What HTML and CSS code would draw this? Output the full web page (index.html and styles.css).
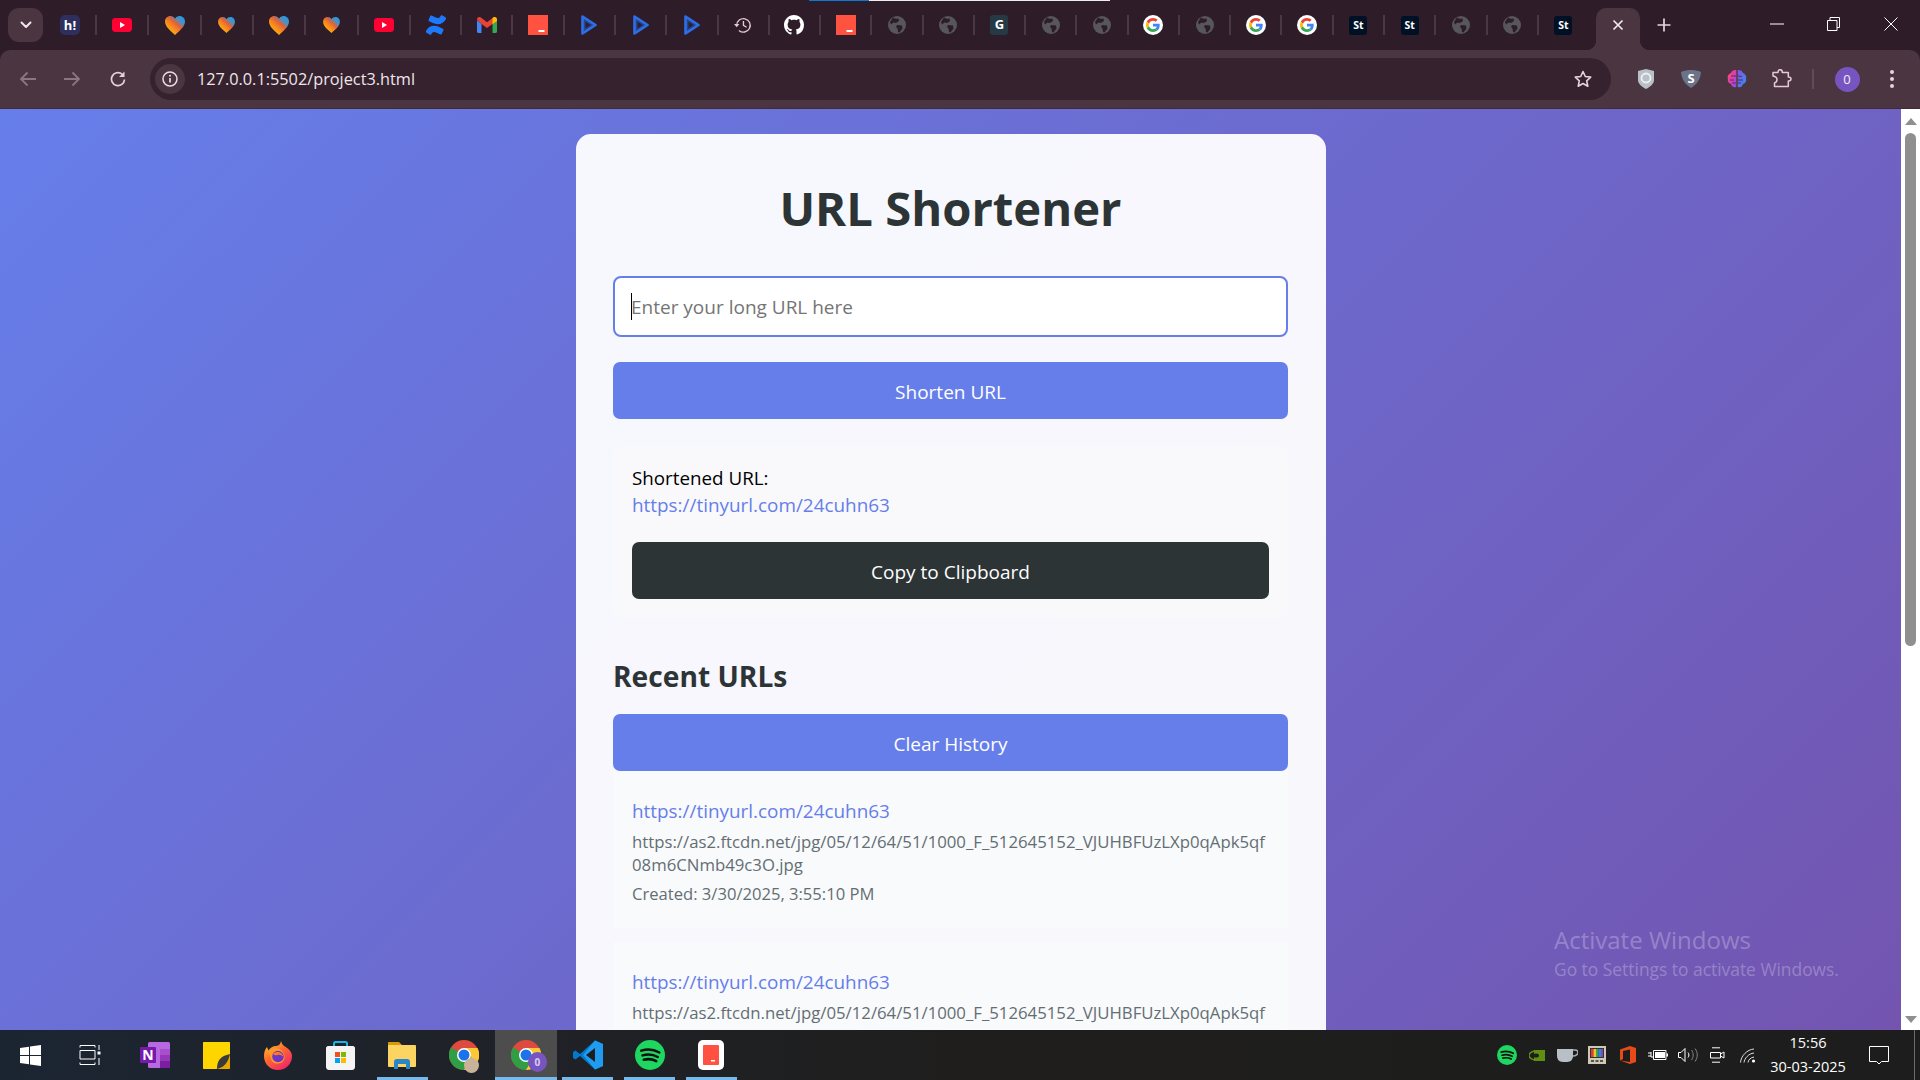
FILE: index.html
```html
<!DOCTYPE html>
<html lang="en">
<head>
<meta charset="utf-8">
<title>URL Shortener</title>
<link rel="stylesheet" href="styles.css">
</head>
<body>
<svg class="defs" aria-hidden="true">
  <defs>
    <linearGradient id="hg" x1=".2" y1=".95" x2=".95" y2=".15"><stop offset="0" stop-color="#ffc20f"/><stop offset=".4" stop-color="#f6821f"/><stop offset=".6" stop-color="#e0603a"/><stop offset=".76" stop-color="#5f8bb0"/><stop offset="1" stop-color="#1f9be8"/></linearGradient>
    <linearGradient id="brl" x1="0" y1="0" x2="1" y2="1"><stop offset="0" stop-color="#ff7a3c"/><stop offset=".35" stop-color="#f13ba0"/><stop offset="1" stop-color="#8a4fe0"/></linearGradient>
    <linearGradient id="brr" x1="0" y1="0" x2="1" y2="1"><stop offset="0" stop-color="#8a4fe0"/><stop offset="1" stop-color="#2f93f5"/></linearGradient>
    <linearGradient id="ff" x1="0" y1="0" x2=".7" y2="1"><stop offset="0" stop-color="#ffd02e"/><stop offset=".5" stop-color="#ff6a2c"/><stop offset="1" stop-color="#f0266a"/></linearGradient>
    <symbol id="yt" viewBox="0 0 20 14"><rect width="20" height="14" rx="3.4" fill="#ff0033"/><path d="M8 4l5 3-5 3z" fill="#fff"/></symbol>
    <symbol id="heart" viewBox="0 0 20 19"><path d="M10 19C6 15 0 11 0 5.500 0 2.300 2.500 0 5.300 0 7.300 0 9 1 10 2.800 11 1 12.700 0 14.700 0 17.500 0 20 2.300 20 5.500 20 11 14 15 10 19z" fill="url(#hg)"/></symbol>
    <symbol id="conf" viewBox="0 0 24 24"><g fill="#1d7afc" stroke="#1d7afc" stroke-width="1.300" stroke-linejoin="round"><path d="M1.300 18.300c-.3.5-.6 1-.9 1.400a.5.5 0 0 0 .2.7l4.400 2.700a.5.5 0 0 0 .7-.2c.2-.4.5-.8.8-1.300 1.700-2.900 3.500-2.500 6.700-1l4.400 2.100a.5.5 0 0 0 .7-.3l2.100-4.700a.5.5 0 0 0-.3-.7c-.9-.4-2.800-1.300-4.400-2.100C10 12.700 4.800 13 1.300 18.300z"/><path d="M22.700 5.700c.3-.5.6-1 .9-1.400a.5.5 0 0 0-.2-.7L19 .9a.5.5 0 0 0-.7.2c-.2.4-.5.8-.8 1.300-1.700 2.900-3.500 2.500-6.700 1L6.400 1.300a.5.5 0 0 0-.7.3L3.600 6.300a.5.5 0 0 0 .3.7c.9.4 2.800 1.300 4.400 2.100 5.700 2.200 10.900 1.900 14.400-3.400z"/></g></symbol>
    <symbol id="gmail" viewBox="0 0 20 16"><path d="M0 3v11.500C0 15.300.7 16 1.500 16H4.500V7z" fill="#4285f4"/><path d="M15.500 7v9h3c.8 0 1.500-.7 1.500-1.500V3z" fill="#34a853"/><path d="M0 2.500C0 .5 2.200-.7 3.800.5L10 5.200 16.200.5C17.800-.7 20 .5 20 2.500L15.500 7 10 11 4.500 7z" fill="#ea4335"/><path d="M16.200.5C17.800-.7 20 .5 20 2.500V4l-4.500 3.300V1z" fill="#fbbc04"/></symbol>
    <symbol id="red" viewBox="0 0 20 20"><rect width="20" height="20" fill="#ff5240"/><rect x="10.500" y="15" width="6" height="2" fill="#fff"/></symbol>
    <symbol id="play" viewBox="0 0 16 20"><path d="M1.500 1.500L14.500 10 1.500 18.500z" fill="#26478e" stroke="#2d6fe8" stroke-width="2.600" stroke-linejoin="round"/><path d="M4.500 6.800L9.800 10 4.500 13.400z" fill="#2e2030"/></symbol>
    <symbol id="hist" viewBox="0 0 20 20"><path d="M3 10.500A7.500 7.500 0 1 1 5.500 16" fill="none" stroke="#e3c8d6" stroke-width="1.500"/><path d="M0 9h6l-3 3.500z" fill="#e3c8d6"/><path d="M10.500 5.500V10.500l3.500 2" fill="none" stroke="#e3c8d6" stroke-width="1.500"/></symbol>
    <symbol id="gh" viewBox="0 0 16 16"><path d="M8 0C3.580 0 0 3.580 0 8c0 3.540 2.290 6.530 5.470 7.590.4.070.55-.17.55-.38 0-.19-.01-.82-.01-1.490-2.010.37-2.530-.49-2.690-.94-.09-.23-.48-.94-.82-1.130-.28-.15-.68-.52-.01-.53.63-.01 1.080.58 1.230.82.72 1.210 1.870.87 2.330.66.07-.52.28-.87.51-1.070-1.780-.2-3.640-.89-3.640-3.950 0-.87.31-1.590.82-2.150-.08-.2-.36-1.020.08-2.120 0 0 .67-.21 2.200.82.64-.18 1.320-.27 2-.27s1.360.09 2 .27c1.530-1.040 2.200-.82 2.200-.82.44 1.100.16 1.920.08 2.120.51.56.82 1.270.82 2.150 0 3.070-1.870 3.750-3.650 3.950.29.25.54.73.54 1.480 0 1.070-.01 1.930-.01 2.200 0 .21.15.46.55.38A8.010 8.010 0 0 0 16 8c0-4.420-3.580-8-8-8z" fill="#fff"/></symbol>
    <symbol id="globe" viewBox="0 0 18 18"><circle cx="9" cy="9" r="9" fill="#56565c"/><path d="M5 1.500C7 3 9 3 10.500 2.500L11 5 8 7 5.500 6.500 3 8.500 2 6zM9 9l5 .5.5 3-3 4-1.500-.5-.5-3.500L8 11z" fill="#2e1c28"/></symbol>
    <symbol id="glogo" viewBox="0 0 48 48"><path fill="#EA4335" d="M24 9.500c3.540 0 6.710 1.220 9.210 3.600l6.850-6.850C35.900 2.380 30.470 0 24 0 14.620 0 6.510 5.380 2.560 13.220l7.980 6.190C12.430 13.720 17.740 9.500 24 9.500z"/><path fill="#4285F4" d="M46.980 24.550c0-1.570-.15-3.090-.38-4.550H24v9.020h12.940c-.58 2.960-2.260 5.480-4.780 7.180l7.730 6c4.510-4.180 7.090-10.360 7.090-17.650z"/><path fill="#FBBC05" d="M10.530 28.590c-.48-1.450-.76-2.990-.76-4.590s.27-3.140.76-4.590l-7.980-6.190C.92 16.460 0 20.120 0 24c0 3.880.92 7.540 2.560 10.780l7.970-6.190z"/><path fill="#34A853" d="M24 48c6.480 0 11.930-2.130 15.890-5.810l-7.730-6c-2.150 1.450-4.920 2.300-8.160 2.300-6.260 0-11.570-4.220-13.470-9.910l-7.980 6.190C6.510 42.620 14.620 48 24 48z"/></symbol>
    <symbol id="spot" viewBox="0 0 24 24"><circle cx="12" cy="12" r="12" fill="#1ed760"/><path d="M5 8.500c5-1.400 10-1 14.500 1.500M6 12.300c4.400-1.200 8.500-.8 12.200 1.300M7 15.800c3.600-.9 7-.6 10 1.100" fill="none" stroke="#111" stroke-width="2" stroke-linecap="round"/></symbol>
    <symbol id="chrome" viewBox="0 0 30 30"><circle cx="15" cy="15" r="15" fill="#dd4a3e"/><path d="M15 15L2 7.500A15 15 0 0 0 15 30L22.500 17z" fill="#2f9e44"/><path d="M15 8h13.500A15 15 0 0 1 15 30l7.500-13z" fill="#fcc934"/><circle cx="15" cy="15" r="7" fill="#fff"/><circle cx="15" cy="15" r="5.500" fill="#1a73e8"/></symbol>
  </defs>
</svg>

<div class="screen">
  <header class="tabstrip">
    <div class="loadbar"><span class="load-blue"></span><span class="load-white"></span></div>
    <button class="tabsearch"><svg width="12" height="8" viewBox="0 0 12 8"><path d="M1.500 1.500L6 6l4.500-4.500" fill="none" stroke="#f0e6ec" stroke-width="2" stroke-linecap="round" stroke-linejoin="round"/></svg></button>
    <div class="tabs">
      <div class="tab"><span class="fav-h">h!</span></div>
      <div class="tab"><svg width="20" height="14"><use href="#yt"/></svg></div>
      <div class="tab"><svg width="20" height="19"><use href="#heart"/></svg></div>
      <div class="tab"><svg width="17" height="16"><use href="#heart"/></svg></div>
      <div class="tab"><svg width="20" height="19"><use href="#heart"/></svg></div>
      <div class="tab"><svg width="17" height="16"><use href="#heart"/></svg></div>
      <div class="tab"><svg width="20" height="14"><use href="#yt"/></svg></div>
      <div class="tab"><svg width="20" height="20"><use href="#conf"/></svg></div>
      <div class="tab"><svg width="20" height="16"><use href="#gmail"/></svg></div>
      <div class="tab"><svg width="20" height="20"><use href="#red"/></svg></div>
      <div class="tab"><svg width="16" height="20"><use href="#play"/></svg></div>
      <div class="tab"><svg width="16" height="20"><use href="#play"/></svg></div>
      <div class="tab"><svg width="16" height="20"><use href="#play"/></svg></div>
      <div class="tab"><svg width="18" height="18"><use href="#hist"/></svg></div>
      <div class="tab"><svg width="20" height="20"><use href="#gh"/></svg></div>
      <div class="tab"><svg width="20" height="20"><use href="#red"/></svg></div>
      <div class="tab"><svg width="18" height="18"><use href="#globe"/></svg></div>
      <div class="tab"><svg width="18" height="18"><use href="#globe"/></svg></div>
      <div class="tab"><span class="fav-g">G</span></div>
      <div class="tab"><svg width="18" height="18"><use href="#globe"/></svg></div>
      <div class="tab"><svg width="18" height="18"><use href="#globe"/></svg></div>
      <div class="tab"><span class="fav-google"><svg width="14" height="14"><use href="#glogo"/></svg></span></div>
      <div class="tab"><svg width="18" height="18"><use href="#globe"/></svg></div>
      <div class="tab"><span class="fav-google"><svg width="14" height="14"><use href="#glogo"/></svg></span></div>
      <div class="tab"><span class="fav-google"><svg width="14" height="14"><use href="#glogo"/></svg></span></div>
      <div class="tab"><span class="fav-st">St</span></div>
      <div class="tab"><span class="fav-st">St</span></div>
      <div class="tab"><svg width="18" height="18"><use href="#globe"/></svg></div>
      <div class="tab"><svg width="18" height="18"><use href="#globe"/></svg></div>
      <div class="tab"><span class="fav-st">St</span></div>
    </div>
    <div class="tab-active"><svg width="12" height="12" viewBox="0 0 12 12"><path d="M1.500 1.500l9 9m0-9l-9 9" stroke="#f3e8ee" stroke-width="1.700"/></svg></div>
    <button class="newtab"><svg width="14" height="14" viewBox="0 0 14 14"><path d="M7 .5v13M.5 7h13" stroke="#e9d5e0" stroke-width="1.700"/></svg></button>
    <div class="winctl">
      <span class="winbtn"><svg width="14" height="2" viewBox="0 0 14 2"><path d="M0 1h14" stroke="#fff"/></svg></span>
      <span class="winbtn"><svg width="13" height="14" viewBox="0 0 13 14"><path d="M.5 3.500h9.500v10H.5z M3 3.500V.5h9.500v10H10" fill="none" stroke="#fff"/></svg></span>
      <span class="winbtn winbtn-close"><svg width="14" height="14" viewBox="0 0 14 14"><path d="M.5.500l13 13m0-13l-13 13" stroke="#fff"/></svg></span>
    </div>
  </header>

  <nav class="toolbar">
    <span class="navbtn"><svg width="18" height="16" viewBox="0 0 18 16"><path d="M17 8H2M8.500 1.500L2 8l6.500 6.500" fill="none" stroke="#8a7581" stroke-width="1.800"/></svg></span>
    <span class="navbtn"><svg width="18" height="16" viewBox="0 0 18 16"><path d="M1 8h15M9.500 1.500L16 8l-6.500 6.500" fill="none" stroke="#8a7581" stroke-width="1.800"/></svg></span>
    <span class="navbtn navbtn-reload"><svg width="16" height="16" viewBox="0 0 16 16"><path d="M14.500 8.500A6.500 6.500 0 1 1 12 3" fill="none" stroke="#e6d3dd" stroke-width="1.700"/><path d="M14.500 .5v5.500H9z" fill="#e6d3dd"/></svg></span>
    <div class="omnibox">
      <span class="site-info"><svg width="16" height="16" viewBox="0 0 16 16"><circle cx="8" cy="8" r="7" fill="none" stroke="#eadde4" stroke-width="1.500"/><path d="M8 7v4.500" stroke="#eadde4" stroke-width="1.700"/><circle cx="8" cy="4.800" r="1" fill="#eadde4"/></svg></span>
      <span class="url">127.0.0.1:5502/project3.html</span>
      <svg class="star" width="18" height="18" viewBox="0 0 18 18"><path d="M9 1.500l2.300 5 5.400.6-4 3.700 1.100 5.400L9 13.500l-4.800 2.700 1.100-5.400-4-3.700 5.400-.6z" fill="none" stroke="#e6d3dd" stroke-width="1.600" stroke-linejoin="round"/></svg>
    </div>
    <span class="ext"><svg width="16" height="20" viewBox="0 0 16 20"><path d="M8 0l8 2v9c0 4-4 7-8 9-4-2-8-5-8-9V2z" fill="#b9c0c8"/><circle cx="8" cy="9" r="4.500" fill="none" stroke="#eef0f2" stroke-width="1.800"/></svg></span>
    <span class="ext"><svg width="20" height="18" viewBox="0 0 20 18"><path d="M10 0c3 0 7 .6 10 2-.5 7-4 12.500-10 16C4 14.500.5 9 0 2c3-1.400 7-2 10-2z" fill="#6b7388"/><text x="10" y="12.500" class="svg-s">S</text></svg></span>
    <span class="ext"><svg width="20" height="20" viewBox="0 0 20 20"><path d="M9.300 1C6.500.5 4.500 2 4 4 1.500 5 0 7.500 1 10c-.8 2.500 1 4.500 3 5 .6 2.500 3 4 5.300 3z" fill="url(#brl)"/><path d="M10.700 1c2.800-.5 4.800 1 5.300 3 2.500 1 4 3.500 3 6 .8 2.500-1 4.500-3 5-.6 2.500-3 4-5.300 3z" fill="url(#brr)"/><path d="M4 7h5M3 11h4M5 14h4M11 7l4 .5M11 11h5M11 14h3" stroke="#3a2c40" stroke-width=".8"/></svg></span>
    <span class="ext"><svg width="20" height="20" viewBox="0 0 20 20"><path d="M1 3.500h5C6 1.500 7 .7 8.200.7S10.300 1.500 10.300 3.500h6V8c1.800 0 2.700.9 2.700 2s-.9 2-2.700 2v5.500H2.500V14C4 13.500 5 12 5 10.500S4 7.500 1 7z" fill="none" stroke="#e6c9d6" stroke-width="1.500" stroke-linejoin="round"/></svg></span>
    <span class="tb-sep"></span>
    <span class="avatar-cell"><span class="avatar">0</span></span>
    <span class="menu-cell"><svg width="4" height="18" viewBox="0 0 4 18"><circle cx="2" cy="2" r="2" fill="#e6d3dd"/><circle cx="2" cy="9" r="2" fill="#e6d3dd"/><circle cx="2" cy="16" r="2" fill="#e6d3dd"/></svg></span>
  </nav>

  <div class="page">
    <main class="viewport">
      <div class="doc">
        <section class="card">
          <h1 class="title">URL Shortener</h1>
          <div class="field">
            <input class="url-input" type="text" placeholder="Enter your long URL here">
            <span class="caret"></span>
          </div>
          <button class="btn btn-primary">Shorten URL</button>
          <div class="result">
            <p class="result-label">Shortened URL:</p>
            <a class="link" href="#">https://tinyurl.com/24cuhn63</a>
            <button class="btn btn-dark">Copy to Clipboard</button>
          </div>
          <h2 class="recent">Recent URLs</h2>
          <button class="btn btn-primary btn-clear">Clear History</button>
          <article class="item">
            <a class="link" href="#">https://tinyurl.com/24cuhn63</a>
            <p class="orig">https://as2.ftcdn.net/jpg/05/12/64/51/1000_F_512645152_VJUHBFUzLXp0qApk5qf<br>08m6CNmb49c3O.jpg</p>
            <p class="created">Created: 3/30/2025, 3:55:10 PM</p>
          </article>
          <article class="item">
            <a class="link" href="#">https://tinyurl.com/24cuhn63</a>
            <p class="orig">https://as2.ftcdn.net/jpg/05/12/64/51/1000_F_512645152_VJUHBFUzLXp0qApk5qf<br>08m6CNmb49c3O.jpg</p>
            <p class="created">Created: 3/30/2025, 3:55:02 PM</p>
          </article>
        </section>
      </div>
      <div class="watermark">
        <p class="wm-1">Activate Windows</p>
        <p class="wm-2">Go to Settings to activate Windows.</p>
      </div>
    </main>
    <aside class="scrollbar">
      <span class="arrow-up"></span>
      <span class="thumb"></span>
      <span class="arrow-down"></span>
    </aside>
  </div>

  <footer class="taskbar">
    <div class="task-left">
      <span class="task"><svg width="21" height="21" viewBox="0 0 21 21"><path d="M0 3l9-1.300V10H0zM10 1.500L21 0v10H10zM0 11h9v8.300L0 18zM10 11h11v10l-11-1.500z" fill="#fff"/></svg></span>
      <span class="task task-view"><svg width="22" height="20" viewBox="0 0 22 20"><path d="M1 .5h15M1 5.500h15V14H1zM1 19.500h15M1 .5v2M16 .5v2M1 17.500v2M16 17.500v2M20 0v5M20 13v7" fill="none" stroke="#fff"/><rect x="18.500" y="6.500" width="3" height="3" fill="#fff"/></svg></span>
      <span class="task"><svg width="30" height="26" viewBox="0 0 30 26"><rect x="8" width="22" height="26" rx="1.500" fill="#b868e0"/><rect x="20" y="7" width="10" height="6" fill="#a850cc"/><rect x="20" y="13" width="10" height="6" fill="#9636b8"/><rect x="20" y="19" width="10" height="7" fill="#7a1fa2"/><rect y="5" width="16" height="16" rx="1" fill="#7719aa"/><text x="8" y="18" class="svg-n">N</text></svg></span>
      <span class="task"><svg width="27" height="27" viewBox="0 0 27 27"><path d="M1 0h25c.6 0 1 .4 1 1v16L17 27H1c-.6 0-1-.4-1-1V1c0-.6.400-1 1-1z" fill="#ffd500"/><path d="M27 12v14c0 .6-.4 1-1 1h-13z" fill="#e8a800"/><path d="M14 27c0-8 3-13 13-15-2 8-5 13-13 15z" fill="#3a3a3a"/></svg></span>
      <span class="task"><svg width="28" height="29" viewBox="0 0 28 29"><path d="M14 29C6 29 0 23 0 15 0 11 1.500 7.500 3 6l1.500 3.500C6 7 8.500 5.500 11 5c3 0 5-.5 6-5 1 3 1.500 4 4 5.500 4 2.500 7 5.500 7 9.500 0 8-6 14-14 14z" fill="url(#ff)"/><path d="M4 10c3-2.500 6-3 9-2.500 4 .5 7 3.500 7.500 7.500.5 4-2 7-6 7.500-4 .5-7-1.500-7.500-5z" fill="#ff9a26"/><circle cx="14" cy="15.500" r="5.800" fill="#6e35c9"/><path d="M9 13c2-2 5-2.500 7-1.500 2 1 3 2.500 3 4-2-1.800-4-2.300-5.500-1.500-1.500.5-3 .3-4.500-1z" fill="#ff7a1f"/></svg></span>
      <span class="task"><svg width="29" height="29" viewBox="0 0 29 29"><path d="M8 6V2.500C8 1.500 8.700 1 9.500 1h10c.8 0 1.500.5 1.500 1.500V6" fill="none" stroke="#19b5e8" stroke-width="2"/><path d="M2 5h25c1 0 2 1 2 2v19c0 1.500-1 3-3 3H3c-2 0-3-1.500-3-3V7c0-1 1-2 2-2z" fill="#f4f4f4"/><rect x="9" y="11" width="5" height="5" fill="#f25022"/><rect x="15" y="11" width="5" height="5" fill="#7fba00"/><rect x="9" y="17" width="5" height="5" fill="#00a4ef"/><rect x="15" y="17" width="5" height="5" fill="#ffb900"/></svg></span>
      <span class="task task-run"><svg width="28" height="28" viewBox="0 0 28 28"><path d="M0 2c0-.6.4-1 1-1h10l3 3v3H0z" fill="#d99a09"/><rect y="4" width="28" height="22" rx="1" fill="#fcd462"/><path d="M6 28v-7c0-2 1-3 3-3h10c2 0 3 1 3 3v7h-4v-5h-8v5z" fill="#2a85c9"/></svg></span>
      <span class="task"><svg width="30" height="30"><use href="#chrome"/></svg><span class="badge-photo"></span></span>
      <span class="task task-active"><svg width="30" height="30"><use href="#chrome"/></svg><span class="badge-o">0</span></span>
      <span class="task task-run"><svg width="30" height="30" viewBox="0 0 30 30"><path d="M22 .5L30 4v22l-8 3.500L7 16l-4.500 3.500L0 18V12l2.500-1.500L7 14z" fill="#007acc"/><path d="M22 .5L30 4v22l-8 3.500L10 15z" fill="#1f9cf0"/><path d="M22 8L13 15l9 7z" fill="#1c1e22"/></svg></span>
      <span class="task task-run"><svg width="30" height="30"><use href="#spot"/></svg></span>
      <span class="task task-run"><svg width="26" height="30" viewBox="0 0 26 30"><rect width="26" height="30" rx="5" fill="#fff"/><rect x="5" y="5" width="16" height="20" rx="1" fill="#ff5240"/><rect x="13" y="20" width="4" height="1.500" fill="#fff"/></svg></span>
    </div>
    <div class="task-right">
      <span class="tray"><svg width="20" height="20"><use href="#spot"/></svg></span>
      <span class="tray"><svg width="16" height="11" viewBox="0 0 16 11"><rect x="5" width="11" height="11" fill="#5f8f12"/><ellipse cx="7" cy="5.500" rx="7" ry="4.500" fill="none" stroke="#5f8f12" stroke-width="1.500"/><ellipse cx="7" cy="5.500" rx="3" ry="2" fill="#1e1e1e"/></svg></span>
      <span class="tray"><svg width="21" height="14" viewBox="0 0 21 14"><path d="M0 1h16v7c0 3-2 6-6 6H6c-4 0-6-3-6-6z" fill="#b9bfc7"/><path d="M16 2h2c2 0 3 1 3 2.500S19 8 16 8" fill="none" stroke="#aaa" stroke-width="1.500"/></svg></span>
      <span class="tray"><svg width="18" height="18" viewBox="0 0 18 18"><rect width="18" height="18" fill="#cfc8b4"/><rect x="2" y="2" width="14" height="10" fill="#333"/><rect x="3" y="3" width="2.500" height="8" fill="#e53935"/><rect x="5.500" y="3" width="2.500" height="8" fill="#fbc02d"/><rect x="8" y="3" width="2.500" height="8" fill="#43a047"/><rect x="10.500" y="3" width="2.500" height="8" fill="#1e88e5"/><rect x="13" y="3" width="2" height="8" fill="#8e44ad"/><rect x="3" y="14" width="3" height="2" fill="#555"/><rect x="7.500" y="14" width="3" height="2" fill="#555"/><rect x="12" y="14" width="3" height="2" fill="#555"/></svg></span>
      <span class="tray"><svg width="16" height="18" viewBox="0 0 16 18"><path d="M0 3.500L10 0l6 2v14l-6 2L0 14.500 10 16V3.500L3 5v8l-3 1.500z" fill="#e64a19"/></svg></span>
      <span class="tray"><svg width="20" height="12" viewBox="0 0 20 12"><path d="M5.500 1.500h12.500v9H5.500z" fill="none" stroke="#fff"/><rect x="7" y="3" width="10" height="6" fill="#fff"/><rect x="18.500" y="4.500" width="1.500" height="3" fill="#fff"/><path d="M0 4h3M0 7h3M3 3v5h2" stroke="#fff" fill="none"/></svg></span>
      <span class="tray"><svg width="20" height="14" viewBox="0 0 20 14"><path d="M.5 4.500h2.500l4-4v13l-4-4H.5z" fill="none" stroke="#fff"/><path d="M10 4.500c1.200 1.500 1.200 3.500 0 5" fill="none" stroke="#fff"/><path d="M13.500 2c2.200 3 2.200 7 0 10M17 .5c3 4 3 9 0 13" fill="none" stroke="#888"/></svg></span>
      <span class="tray"><svg width="15" height="16" viewBox="0 0 15 16"><path d="M2 .8h8M2 15.200h8" stroke="#fff"/><path d="M.5 5.500h10v5.500H.5zM10.500 7l3.500-2v6l-3.500-2z" fill="none" stroke="#fff"/></svg></span>
      <span class="tray"><svg width="16" height="15" viewBox="0 0 16 15"><path d="M.5 14.500C1 8 7 1.500 14 1M4 14.500C4.500 10.500 8.500 5.500 14 5M8 14.500c.2-2.500 2.500-5 6-5.500" fill="none" stroke="#fff" opacity=".85"/><circle cx="13.500" cy="13" r="1.600" fill="#fff"/></svg></span>
      <span class="clock"><span>15:56</span><span>30-03-2025</span></span>
      <span class="notif"><svg width="20" height="19" viewBox="0 0 20 19"><path d="M.5.500h19v15H12.500L10 18l-2.500-2.500H.5z" fill="none" stroke="#fff"/></svg></span>
      <span class="desk-line"></span>
    </div>
  </footer>
</div>
</body>
</html>
```

FILE: styles.css
```css
* { box-sizing: border-box; }
html, body { margin: 0; height: 100%; overflow: hidden; }
body { font-family: "Open Sans", "Noto Sans", sans-serif; background: #2e1c28; }
p, h1, h2 { margin: 0; }
button { font-family: inherit; border: 0; padding: 0; }
.defs { position: absolute; width: 0; height: 0; }
.screen { display: flex; flex-direction: column; width: 1920px; height: 1080px; }

/* tab strip */
.tabstrip { position: relative; display: flex; flex: none; height: 50px; padding-left: 8px; background: #2e1c28; }
.loadbar { position: absolute; top: 0; left: 809px; display: flex; height: 1px; }
.load-blue { width: 60px; background: #0a78d6; }
.load-white { width: 241px; background: #eee; }
.tabsearch { display: flex; align-items: center; justify-content: center; flex: none; width: 35px; height: 34px; margin-top: 8px; border-radius: 11px; background: #4b3541; }
.tabs { display: flex; flex: none; margin-left: .85px; }
.tab { position: relative; display: flex; align-items: center; justify-content: center; flex: none; width: 51.27px; height: 50px; }
.tab:nth-child(-n+7) { width: 52.3px; }
.tab:not(:last-child)::after { content: ""; position: absolute; right: -1px; top: 15px; width: 2px; height: 20px; background: #4b3843; }
.fav-h { display: flex; align-items: center; justify-content: center; width: 20px; height: 20px; border-radius: 5px; background: #2e2f5e; color: #fff; font: 700 13px "Open Sans", sans-serif; }
.fav-g { display: flex; align-items: center; justify-content: center; width: 18px; height: 20px; padding-bottom: 3px; border-radius: 3px; background: #253a45; color: #fff; font: 700 13px "Open Sans", sans-serif; }
.fav-st { display: flex; align-items: center; justify-content: center; width: 18px; height: 19px; border-radius: 3px; background: #001125; color: #fff; font: 700 10.5px "Open Sans", sans-serif; }
.fav-google { display: flex; align-items: center; justify-content: center; width: 20px; height: 20px; border-radius: 50%; background: #fff; }
.tab-active { position: relative; display: flex; align-items: center; justify-content: center; flex: none; width: 44px; height: 42px; margin-top: 8px; margin-left: 7px; padding-bottom: 8px; border-radius: 10px 10px 0 0; background: #4b3541; }
.tab-active::before, .tab-active::after { content: ""; position: absolute; bottom: 0; width: 10px; height: 10px; }
.tab-active::before { left: -10px; background: radial-gradient(circle at 0 0, transparent 10px, #4b3541 10.5px); }
.tab-active::after { right: -10px; background: radial-gradient(circle at 100% 0, transparent 10px, #4b3541 10.5px); }
.newtab { display: flex; align-items: center; justify-content: center; flex: none; width: 36px; height: 34px; margin-top: 8px; margin-left: 6px; background: none; }
.winctl { display: flex; margin-left: auto; }
.winbtn { display: flex; align-items: center; justify-content: center; width: 56px; height: 48px; }
.winbtn-close { width: 59px; }

/* toolbar */
.toolbar { display: flex; align-items: center; flex: none; height: 59px; padding-left: 6px; border-radius: 10px 10px 0 0; background: #4b3541; border-bottom: 1px solid #3f2c38; }
.navbtn { display: flex; align-items: center; justify-content: center; flex: none; width: 44px; height: 42px; }
.navbtn-reload { margin-left: 2px; }
.omnibox { display: flex; align-items: center; flex: none; width: 1461px; height: 42px; margin-left: 10px; padding-left: 5px; border-radius: 21px; background: #35222e; }
.site-info { display: flex; align-items: center; justify-content: center; flex: none; width: 30px; height: 30px; border-radius: 50%; background: #4b3541; }
.url { margin-left: 12px; color: #efe6eb; font: 400 16.3px "Open Sans", sans-serif; }
.star { margin-left: auto; margin-right: 19px; }
.ext { display: flex; align-items: center; justify-content: center; flex: none; width: 45.5px; }
.omnibox + .ext { margin-left: 12px; }
.svg-s { fill: #fff; font: 700 13px "Open Sans", sans-serif; text-anchor: middle; }
.tb-sep { flex: none; width: 2px; height: 20px; margin-left: 7px; background: #614b58; }
.avatar-cell { display: flex; justify-content: center; flex: none; width: 45px; margin-left: 10.5px; }
.avatar { display: flex; align-items: center; justify-content: center; width: 25px; height: 25px; border-radius: 50%; background: #7755c0; color: #f2ecf7; font: 400 13px "Open Sans", sans-serif; }
.menu-cell { display: flex; justify-content: center; flex: none; width: 45px; }

/* page */
.page { display: flex; flex: 1; min-height: 0; }
.viewport { position: relative; flex: 1; overflow: hidden; }
.doc { height: 1590px; padding-top: 25px; background: linear-gradient(135deg, #667eea 0%, #764ba2 100%); }
.card { width: 750px; height: 1500px; margin: 0 auto; padding: 37.5px 37.5px 0; border-radius: 15px; background: rgba(255, 255, 255, .95); }
.title { height: 72px; margin-bottom: 32px; color: #2d3436; font-size: 47.2px; font-weight: 700; line-height: 72px; text-align: center; }
.field { position: relative; margin-bottom: 25px; }
.url-input { display: block; width: 100%; height: 61px; padding: 2px 16px 0; border: 2.5px solid #667eea; border-radius: 8px; outline: 0; background: #fff; color: #2d3436; font: 400 19px "Open Sans", sans-serif; }
.url-input::placeholder { color: #757575; opacity: 1; }
.caret { position: absolute; left: 17.5px; top: 17px; width: 1px; height: 27px; background: #000; }
.btn { display: block; width: 100%; height: 57px; padding-top: 3px; border-radius: 7px; color: #fff; font-size: 19px; line-height: 54px; }
.btn-primary { background: #667eea; }
.btn-dark { margin-top: 23px; background: #2d3436; }
.result { margin-top: 27px; padding: 19px; border-radius: 10px; background: #f9f9fc; }
.result-label { height: 27px; color: #000; font-size: 18.8px; line-height: 26px; }
.link { display: block; height: 27px; color: #667eea; font-size: 18.9px; line-height: 27px; text-decoration: none; }
.recent { height: 40px; margin-top: 38px; color: #2d3436; font-size: 28.2px; font-weight: 700; line-height: 40px; }
.btn-clear { margin-top: 18px; }
.item { height: 157px; margin-bottom: 14px; padding: 27px 19px 0; background: #f9fafc; }
.orig { margin-top: 5px; color: #636e72; font-size: 16.75px; line-height: 23px; white-space: nowrap; }
.created { margin-top: 6px; color: #636e72; font-size: 16.6px; line-height: 23px; }
.watermark { position: absolute; left: 1554px; top: 815px; color: rgba(255, 255, 255, .27); }
.wm-1 { font-size: 24px; line-height: 32px; }
.wm-2 { margin-top: 1px; font-size: 17.4px; line-height: 24px; }

/* scrollbar */
.scrollbar { display: flex; flex-direction: column; align-items: center; flex: none; width: 19px; padding: 9px 0 7px; background: #fff; }
.arrow-up { width: 0; height: 0; border: solid transparent; border-width: 0 6.5px 7px; border-bottom-color: #8f8f8f; }
.thumb { width: 11px; height: 513px; margin-top: 8px; border-radius: 6px; background: #8f8f8f; }
.arrow-down { width: 0; height: 0; margin-top: auto; border: solid transparent; border-width: 7px 6.5px 0; border-top-color: #8f8f8f; }

/* taskbar */
.taskbar { display: flex; flex: none; height: 50px; background: linear-gradient(90deg, #1b2532 0%, #1f2228 25%, #1f1e1d 50%, #1d1d1d 100%); }
.task-left { display: flex; }
.task { position: relative; display: flex; align-items: center; justify-content: center; flex: none; width: 61.87px; height: 50px; }
.task-view { padding-right: 6px; }
.task-run::after { content: ""; position: absolute; left: 5.5px; right: 5.5px; bottom: 0; height: 3px; background: #76b9ed; }
.task-active { background: #4d4d4d; }
.task-active::after { content: ""; position: absolute; left: 0; right: 0; bottom: 0; height: 3px; background: #76b9ed; }
.svg-n { fill: #fff; font: 700 14px "Open Sans", sans-serif; text-anchor: middle; }
.badge-o { position: absolute; left: 33px; top: 22px; display: flex; align-items: center; justify-content: center; width: 19px; height: 20px; border-radius: 50%; background: #7755c0; color: #d9cdf0; font: 700 10px "Open Sans", sans-serif; }
.badge-photo { position: absolute; left: 31px; top: 28px; width: 15px; height: 15px; border-radius: 50%; background: #c9b29a; }
.task-right { display: flex; align-items: center; margin-left: auto; }
.tray { display: flex; align-items: center; justify-content: center; flex: none; width: 30.1px; height: 50px; }
.clock { display: flex; flex-direction: column; align-items: center; flex: none; width: 90px; color: #fff; font-size: 14.5px; line-height: 24px; }
.notif { display: flex; align-items: center; justify-content: center; flex: none; width: 52px; }
.desk-line { flex: none; width: 1px; height: 50px; margin: 0 5px 0 9px; background: #6b6b6b; }
```
